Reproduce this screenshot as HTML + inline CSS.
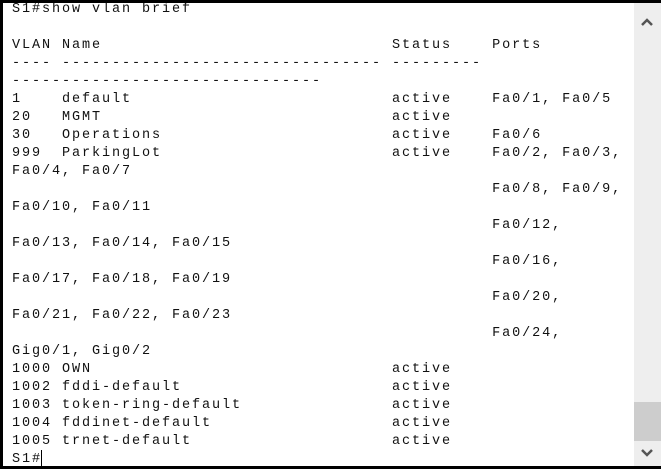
<!DOCTYPE html>
<html><head><style>
html,body{margin:0;padding:0;background:#fff;}
#w{position:relative;width:661px;height:469px;overflow:hidden;background:#fff;}
#bt{position:absolute;left:0;top:0;width:661px;height:3px;background:#000;}
#bb{position:absolute;left:0;top:466px;width:661px;height:3px;background:#000;}
#bl{position:absolute;left:0;top:0;width:3px;height:469px;background:#000;}
#sb{position:absolute;left:634px;top:3px;width:27px;height:463px;background:#eeeeee;}
#th{position:absolute;left:634px;top:402px;width:27px;height:39px;background:#cdcdcd;}
pre{position:absolute;left:12px;top:1px;margin:0;font-family:"Liberation Mono",monospace;font-size:13.5px;letter-spacing:1.9px;line-height:18px;color:#111;}
#cur{position:absolute;left:41px;top:450px;width:1px;height:16px;background:#000;}
</style></head><body><div id="w">
<pre>S1#show vlan brief

VLAN Name                             Status    Ports
---- -------------------------------- ---------
-------------------------------
1    default                          active    Fa0/1, Fa0/5
20   MGMT                             active
30   Operations                       active    Fa0/6
999  ParkingLot                       active    Fa0/2, Fa0/3,
Fa0/4, Fa0/7
                                                Fa0/8, Fa0/9,
Fa0/10, Fa0/11
                                                Fa0/12,
Fa0/13, Fa0/14, Fa0/15
                                                Fa0/16,
Fa0/17, Fa0/18, Fa0/19
                                                Fa0/20,
Fa0/21, Fa0/22, Fa0/23
                                                Fa0/24,
Gig0/1, Gig0/2
1000 OWN                              active
1002 fddi-default                     active
1003 token-ring-default               active
1004 fddinet-default                  active
1005 trnet-default                    active
S1#</pre>
<div id="cur"></div>
<div id="bt"></div><div id="bb"></div><div id="bl"></div>
<div id="sb"></div><div id="th"></div>
<svg style="position:absolute;left:634px;top:3px" width="27" height="463">
<polyline points="8,22 13,17 18,22" fill="none" stroke="#555" stroke-width="2.5"/>
<polyline points="8,447 13,452 18,447" fill="none" stroke="#555" stroke-width="2.5"/>
</svg>
</div></body></html>
